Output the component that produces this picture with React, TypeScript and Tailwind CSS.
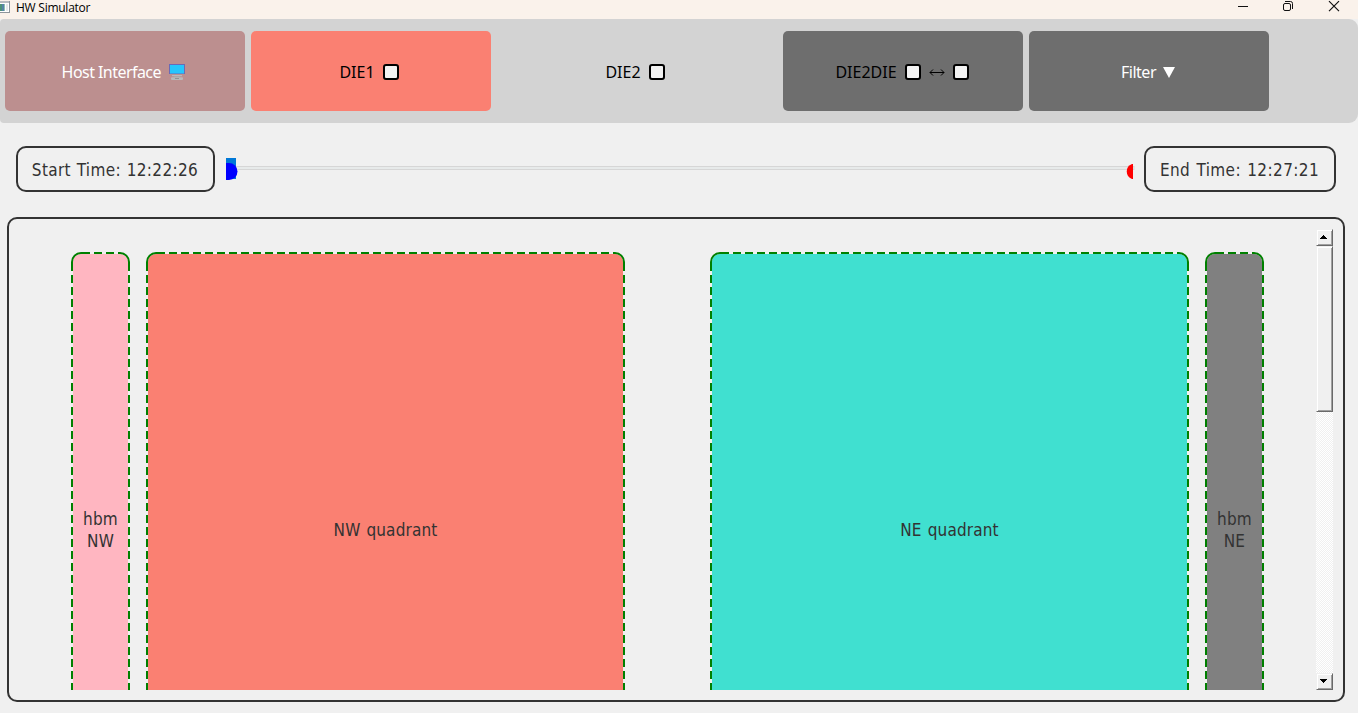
import React from "react";

const dejavu = "font-['DejaVu_Sans_Condensed','DejaVu_Sans',sans-serif] [font-stretch:condensed]";
const noto = "font-['Noto_Sans',sans-serif]";
const bevel =
  "border border-t-[#f0f0f0] border-l-[#f0f0f0] border-r-[#696969] border-b-[#696969] bg-[#f0f0f0] shadow-[inset_1px_1px_0_#fff,inset_-1px_-1px_0_#a0a0a0]";

function Box() {
  return <span className="block h-4 w-4 rounded-[3px] border-2 border-black bg-[#f3f3f3]" />;
}

function Monitor() {
  return (
    <svg width="16" height="16" viewBox="0 0 16 16">
      <rect width="16" height="10" fill="#6b69b5" />
      <rect x="1" y="1" width="14" height="8.5" fill="#26c6fc" />
      <rect x="3" y="11" width="10" height="1.2" fill="#b9b9b9" />
      <rect x="5" y="12" width="6" height="1.5" fill="#a8a8a8" />
      <rect x="2" y="13.2" width="12" height="2.8" rx="1" fill="#b9b9b9" />
      <rect x="6" y="14" width="4" height="1" fill="#929292" />
    </svg>
  );
}

function Block({ width, className, label }: { width: number; className: string; label: string[] }) {
  return (
    <div className="relative h-full shrink-0" style={{ width }}>
      <div className={"mx-[2px] mt-[2px] flex h-[436px] flex-col items-center rounded-t-[8px] " + className}>
        <div className={`${label.length > 1 ? "mt-[254px]" : "mt-[265px]"} text-center text-[17px] leading-[22px] tracking-[0.15px] text-[#333] [word-spacing:1px] ${dejavu}`}>
          {label.map((l) => <div key={l}>{l}</div>)}
        </div>
      </div>
      <svg className="absolute left-0 top-0" width={width} height="438" fill="none" stroke="#008000" strokeWidth="2">
        <path d={`M1 12V10A9 9 0 0 1 10 1H12M${width - 12} 1H${width - 10}A9 9 0 0 1 ${width - 1} 10V12`} />
        <path d={`M11 1H${width - 10}`} strokeDasharray="8 4" />
        <path d={`M1 11V438M${width - 1} 11V438`} strokeDasharray="8 4" />
      </svg>
    </div>
  );
}

function ScrollButton({ down = false }: { down?: boolean }) {
  return (
    <div className={`flex h-[17px] w-[17px] justify-center pr-[2px] pt-[5px] ${bevel}`}>
      <svg width="7" height="4" shapeRendering="crispEdges">
        <path d={down ? "M0 0h7v1h-1v1h-1v1h-1v1h-1v-1h-1v-1h-1v-1h-1z" : "M3 0h1v1h1v1h1v1h1v1h-7v-1h1v-1h1v-1h1z"} />
      </svg>
    </div>
  );
}

export default function App() {
  return (
    <div className="flex h-[713px] w-[1358px] flex-col overflow-hidden bg-[#f0f0f0]">
      <header className="flex h-[19px] shrink-0 items-start justify-between bg-[#faf2eb]">
        <div className="flex">
          <svg width="10" height="13" className="mt-px">
            <rect width="10" height="12" fill="#8d959c" />
            <rect width="9" height="2" fill="#b9bcc0" />
            <rect y="2" width="9" height="9" fill="#fff" />
            <rect y="3" width="2" height="7" fill="#4d9278" />
            <rect x="2" y="3" width="2" height="7" fill="#5784a8" />
            <rect x="4" y="3" width="1" height="7" fill="#8fc0b0" />
            <rect x="6" y="3" width="2" height="7" fill="#e5e8ea" />
          </svg>
          <span className="ml-[6px] font-['Open_Sans',sans-serif] text-[12px] leading-[16px] tracking-[-0.25px] text-black">HW Simulator</span>
        </div>
        <svg width="110" height="14" fill="none" stroke="#111" className="mr-[10px]">
          <path d="M0 6.5h10" />
          <rect x="45.5" y="3.5" width="7" height="7" rx="1.5" />
          <path d="M47 1.5h5.500a2 2 0 0 1 2 2V9" />
          <path d="M91 1.200l10 10m0-10l-10 10" strokeWidth="1.2" />
        </svg>
      </header>

      <nav className={`flex h-[104px] shrink-0 gap-[6px] rounded-r-[9px] rounded-l-[4px] bg-[#d3d3d3] px-[5px] py-3 text-[16px] leading-[22px] ${noto}`}>
        <div className="flex h-20 w-60 items-center justify-center gap-[8.500px] rounded-[5px] bg-[#bc8f8f] pr-[3px] pt-[2px] text-white">
          <span className="tracking-[-0.55px]">Host Interface</span><Monitor />
        </div>
        <div className="flex h-20 w-60 items-center justify-center gap-2 rounded-[5px] bg-[#fa8072] pr-1 pt-[2px] text-black">
          <span>DIE1</span><Box />
        </div>
        <div className="flex h-20 w-[280px] items-center justify-center gap-2 pr-1 pt-[2px] text-black">
          <span>DIE2</span><Box />
        </div>
        <div className="flex h-20 w-60 items-center justify-center gap-2 rounded-[5px] bg-[#6e6e6e] pr-[2px] pt-[2px] text-black">
          <span>DIE2DIE</span><Box />
          <svg width="16" height="10" viewBox="0 0 16 10" fill="none" stroke="#000"><path d="M1 5.500h14M4 2.500l-3 3 3 3M12 2.500l3 3-3 3" /></svg>
          <Box />
        </div>
        <div className="flex h-20 w-60 items-center justify-center gap-[7px] rounded-[5px] bg-[#6e6e6e] pr-[2px] pt-[2px] text-white">
          <span className="tracking-[-0.5px]">Filter</span>
          <svg width="12" height="11" fill="#fff"><path d="M0 0h12l-6 11z" /></svg>
        </div>
      </nav>

      <div className={`mt-[23px] flex h-[46px] shrink-0 items-center pl-4 text-[17px] text-[#333] ${dejavu}`}>
        <div className="flex h-[46px] w-[199px] items-center justify-center whitespace-nowrap rounded-[10px] border-2 border-[#333] pr-px pt-[3px] tracking-[0.35px] [word-spacing:0.5px]">Start Time: 12:22:26</div>
        <svg width="910" height="46" className="ml-[11px] mr-[8px]">
          <rect x="10" y="20.5" width="898" height="3" fill="#e7eaea" stroke="#d6d6d6" />
          <rect width="10" height="21" y="12" fill="#0078d7" />
          <path d="M0 17H3A8.500 8.500 0 0 1 3 34H0Z" fill="#00f" />
          <path d="M907 18h-1a8 8 0 0 0 0 15h1z" fill="#f00" />
        </svg>
        <div className="flex h-[46px] w-[192px] items-center justify-center whitespace-nowrap rounded-[10px] border-2 border-[#333] pr-px pt-[3px] tracking-[0.4px] [word-spacing:1px]">End Time: 12:27:21</div>
      </div>

      <main className="ml-[7px] mt-[25px] flex h-[485px] w-[1338px] shrink-0 justify-between rounded-[10px] border-2 border-[#333] pl-[62px] pr-[10px] pt-[10px]">
        <div className="mt-[23px] flex h-[438px] overflow-hidden">
          <Block width={59} className="bg-[#ffb6c1]" label={["hbm", "NW"]} />
          <div className="w-4" />
          <Block width={479} className="bg-[#fa8072]" label={["NW quadrant"]} />
          <div className="w-[85px]" />
          <Block width={479} className="bg-[#40e0d0]" label={["NE quadrant"]} />
          <div className="w-4" />
          <Block width={59} className="bg-[#808080]" label={["hbm", "NE"]} />
        </div>
        <div className="flex h-[461px] w-[17px] flex-col bg-[repeating-conic-gradient(#fff_0_25%,#f0f0f0_0_50%)] bg-[size:2px_2px]">
          <ScrollButton />
          <div className={`h-[166px] ${bevel}`} />
          <div className="flex-1" />
          <ScrollButton down />
        </div>
      </main>
    </div>
  );
}
